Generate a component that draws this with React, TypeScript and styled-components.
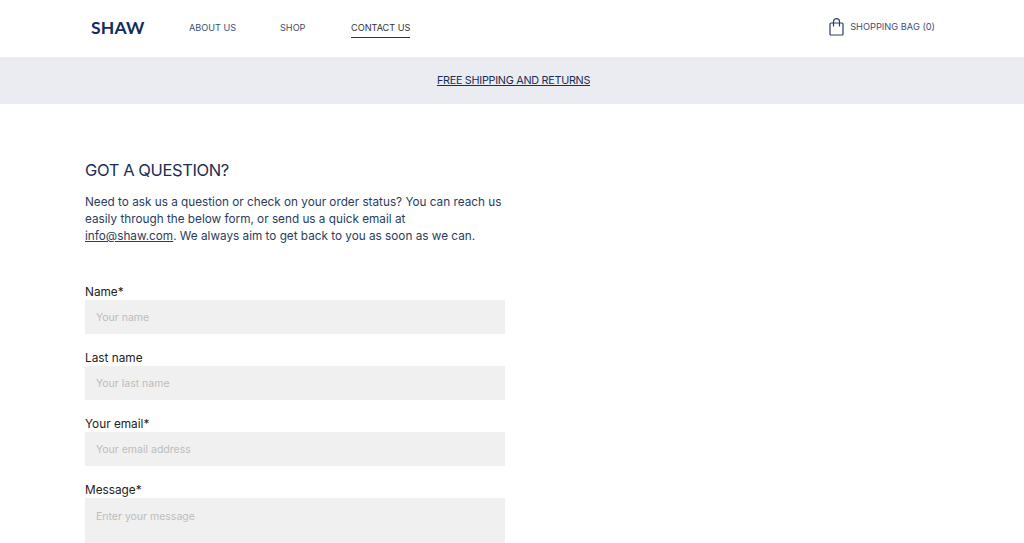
import { createGlobalStyle, styled } from "styled-components";

const GlobalStyle = createGlobalStyle`
  html, body {
    margin: 0;
    height: 100%;
    overflow: hidden;
    background: #fff;
  }
  body {
    font-family: "Inter", "Liberation Sans", sans-serif;
    color: #1b2e54;
  }
  * {
    box-sizing: border-box;
  }
`;

const Header = styled.header`
  height: 57px;
  padding: 0 89px 0 91px;
  display: flex;
  align-items: center;
  justify-content: space-between;
`;

const Left = styled.div`
  display: flex;
  align-items: center;
`;

const Logo = styled.a`
  width: 98px;
  font-family: "Lato", sans-serif;
  font-weight: 700;
  font-size: 17.5px;
  letter-spacing: 0.2px;
  margin-top: -2px;
  color: #142c5a;
`;

const Nav = styled.nav`
  display: flex;
  align-items: center;
`;

const NavLink = styled.a<{ $active?: boolean; $width: number }>`
  width: ${(props) => props.$width}px;
  font-size: 9.15px;
  line-height: 16px;
  white-space: nowrap;
  color: ${(props) => (props.$active ? "#333" : "#3b4e75")};
  span {
    display: inline-block;
    padding-bottom: 1px;
    border-bottom: 1px solid ${(props) => (props.$active ? "#333" : "transparent")};
  }
`;

const Bag = styled.a`
  display: flex;
  align-items: center;
  gap: 6px;
  font-size: 9.25px;
  color: #3b4e75;
  margin-top: -4px;
`;

const Banner = styled.div`
  height: 47px;
  padding-left: 3px;
  background: #ebecf1;
  display: flex;
  align-items: center;
  justify-content: center;
  font-size: 10.8px;
  letter-spacing: -0.27px;
  color: #1b2e54;
  a {
    text-decoration: underline;
  }
`;

const Main = styled.main`
  padding: 56px 0 0 85px;
  width: 505px;
  box-sizing: content-box;
`;

const Title = styled.h1`
  margin: 0;
  font-size: 16.5px;
  letter-spacing: -0.4px;
  line-height: 20px;
  font-weight: 400;
  color: #1b2e54;
`;

const Intro = styled.p`
  margin: 14px 0 0;
  font-size: 11.75px;
  line-height: 17px;
  color: #2a3c60;
  white-space: nowrap;
  a {
    text-decoration: underline;
  }
`;

const Form = styled.form`
  margin-top: 39px;
  width: 420px;
  display: flex;
  flex-direction: column;
  gap: 16px;
`;

const Field = styled.label`
  display: flex;
  flex-direction: column;
  font-size: 11.8px;
  line-height: 16px;
  color: #222;
`;

const Input = styled.input`
  height: 34px;
  border: none;
  outline: none;
  padding: 0 11px;
  background: #f0f0f0;
  font-family: inherit;
  font-size: 10.5px;
  &::placeholder {
    color: #bdbdbd;
  }
`;

const TextArea = styled.textarea`
  height: 90px;
  border: none;
  outline: none;
  resize: none;
  padding: 12px 11px;
  background: #f0f0f0;
  font-family: inherit;
  font-size: 10.5px;
  &::placeholder {
    color: #bdbdbd;
  }
`;

function BagIcon() {
  return (
    <svg width="15" height="18" viewBox="0 0 15 18" fill="none" stroke="#2a3d66" strokeWidth="1.2">
      <rect x="1" y="5" width="13" height="12" rx="1" />
      <path d="M4.5 8.5V3.6a3 3 0 0 1 6 0v4.9" />
    </svg>
  );
}

export default function App() {
  return (
    <>
      <GlobalStyle />
      <Header>
        <Left>
          <Logo>SHAW</Logo>
          <Nav>
            <NavLink $width={91}><span>ABOUT US</span></NavLink>
            <NavLink $width={71}><span>SHOP</span></NavLink>
            <NavLink $width={60} $active><span>CONTACT US</span></NavLink>
          </Nav>
        </Left>
        <Bag>
          <BagIcon />
          SHOPPING BAG (0)
        </Bag>
      </Header>
      <Banner>
        <a>FREE SHIPPING AND RETURNS</a>
      </Banner>
      <Main>
        <Title>GOT A QUESTION?</Title>
        <Intro>
          Need to ask us a question or check on your order status? You can reach us
          <br />
          easily through the below form, or send us a quick email at
          <br />
          <a>info@shaw.com</a>. We always aim to get back to you as soon as we can.
        </Intro>
        <Form>
          <Field>
            Name*
            <Input placeholder="Your name" />
          </Field>
          <Field>
            Last name
            <Input placeholder="Your last name" />
          </Field>
          <Field>
            Your email*
            <Input placeholder="Your email address" />
          </Field>
          <Field>
            Message*
            <TextArea placeholder="Enter your message" />
          </Field>
        </Form>
      </Main>
    </>
  );
}
